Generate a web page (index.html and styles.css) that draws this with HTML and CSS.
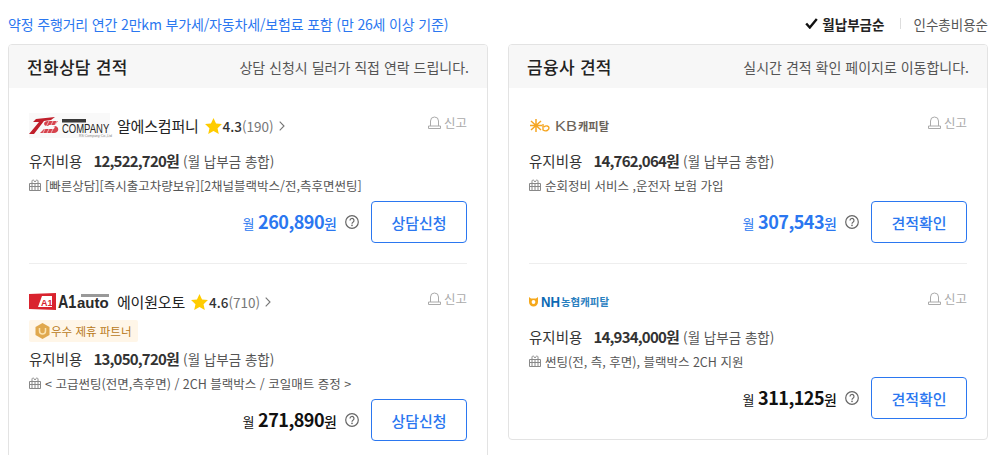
FILE: index.html
```html
<!DOCTYPE html>
<html lang="ko">
<head>
    <meta charset="UTF-8">
    <meta name="viewport" content="width=device-width, initial-scale=1.0">
    <title>견적 비교</title>
    <link rel="stylesheet" href="styles.css">
</head>
<body>
    <svg class="icon-defs" width="0" height="0">
        <symbol id="i-gift" viewBox="0 0 12 12">
            <path d="M.5 4.5h11v7H.5zM6 4.5v7M3 4.5v7M9 4.5v7M.5 7.5h11M3 4.5V2.200C3 .6 5.200.6 6 3c.8-2.400 3-2.400 3-.8v2.300" fill="none" stroke="#888" stroke-width="1"/>
        </symbol>
        <symbol id="i-siren" viewBox="0 0 13 13">
            <path d="M2.500 10V5a4 4 0 0 1 8 0v5M.5 12.500h12V10H.5z" fill="none" stroke="#aaa" stroke-width="1"/>
        </symbol>
        <symbol id="i-help" viewBox="0 0 14 14">
            <circle cx="7" cy="7" r="6.300" fill="none" stroke="#666" stroke-width="1.200"/>
            <path d="M5 5.500a2 2 0 1 1 3 1.700c-.7.400-1 .8-1 1.500" fill="none" stroke="#666" stroke-width="1.200"/>
            <circle cx="7" cy="10.400" r=".8" fill="#666"/>
        </symbol>
        <symbol id="i-star" viewBox="0 0 18 17">
            <path d="M9 0l2.700 5.800 6.300.7-4.700 4.300 1.300 6.200L9 13.900 3.400 17l1.300-6.200L0 6.500l6.300-.7z" fill="#fc0"/>
        </symbol>
        <symbol id="i-chevron" viewBox="0 0 6 10">
            <path d="M.7.7L5 5 .7 9.300" fill="none" stroke="#777" stroke-width="1.100"/>
        </symbol>
    </svg>

    <div class="top-bar">
        <p class="notice">약정 주행거리 연간 2만km 부가세/자동차세/보험료 포함 (만 26세 이상 기준)</p>
        <div class="sort">
            <span class="sort-item active">
                <svg class="check" width="13" height="11" viewBox="0 0 13 11"><path d="M1.200 5.500L4.800 9.500 11.800 1" fill="none" stroke="#111" stroke-width="2.400"/></svg>
                월납부금순
            </span>
            <span class="sort-item">인수총비용순</span>
        </div>
    </div>

    <div class="columns">
        <section class="panel">
            <div class="panel-head">
                <h2>전화상담 견적</h2>
                <p>상담 신청시 딜러가 직접 연락 드립니다.</p>
            </div>

            <div class="item">
                <div class="item-head">
                    <div class="brand">
                        <svg class="logo" width="81" height="25" viewBox="0 0 81 25">
                            <rect width="81" height="25" fill="#f9f9f9"/>
                            <path d="M0 21L10 9H4l3-3 19-2-4 3-7 1L5 21z" fill="#c01f2b"/>
                            <path d="M11 20l4-4h9c2 0 2-3 0-3h-6c-4 0-4-5 1-5h10l-3 4h-6c-1 0-1 1 0 1h6c5 1 4 7-1 7z" fill="#d6424c"/>
                            <path d="M14 20l6-12M18 20l6-12M22 20l6-12" stroke="#fff" stroke-width=".6" fill="none"/>
                            <rect x="33" y="6" width="24" height="3.500" fill="#3a3a3a"/>
                            <text class="logo-company" x="45.200" y="20.500" transform="scale(.73 1)">COMPANY</text>
                            <text class="logo-tiny" x="50" y="24.300">RS Company Co.,Ltd</text>
                        </svg>
                        <span class="brand-name">알에스컴퍼니</span>
                        <svg class="star" width="17" height="16"><use href="#i-star"/></svg>
                        <span class="score">4.3</span><span class="count">(190)</span>
                        <svg class="chevron" width="6" height="10"><use href="#i-chevron"/></svg>
                    </div>
                    <span class="report"><svg width="13" height="13"><use href="#i-siren"/></svg>신고</span>
                </div>
                <p class="cost">유지비용 <b>12,522,720원</b> <span>(월 납부금 총합)</span></p>
                <p class="gift"><svg width="12" height="12"><use href="#i-gift"/></svg>[빠른상담][즉시출고차량보유][2채널블랙박스/전,측후면썬팅]</p>
                <div class="price-row">
                    <span class="price blue">월 <b>260,890</b><strong>원</strong></span>
                    <svg class="help" width="14" height="14"><use href="#i-help"/></svg>
                    <a class="action">상담신청</a>
                </div>
            </div>

            <div class="item">
                <div class="item-head">
                    <div class="brand">
                        <svg class="logo" width="81" height="25" viewBox="0 0 81 25">
                            <path d="M0 5l27-1v17L0 20z" fill="#d9232e"/>
                            <path d="M9 18l4-11h10v11z" fill="#fff"/>
                            <text class="logo-a1" x="12" y="16.500">A1</text>
                            <text class="logo-a1-dark" x="36.200" y="19" transform="scale(.8 1)">A1</text>
                            <rect x="52" y="5" width="28" height="3" fill="#999"/>
                            <text class="logo-auto" x="48" y="19">auto</text>
                        </svg>
                        <span class="brand-name">에이원오토</span>
                        <svg class="star" width="17" height="16"><use href="#i-star"/></svg>
                        <span class="score">4.6</span><span class="count">(710)</span>
                        <svg class="chevron" width="6" height="10"><use href="#i-chevron"/></svg>
                    </div>
                    <span class="report"><svg width="13" height="13"><use href="#i-siren"/></svg>신고</span>
                </div>
                <div class="partner">
                    <svg width="15" height="16" viewBox="0 0 14 16"><path d="M7 0l7 4v8l-7 4-7-4V4z" fill="#e0a84e"/><path d="M4 5v3a3 3 0 0 0 6 0V5" fill="none" stroke="#fbe3b0" stroke-width="1.500"/></svg>
                    우수 제휴 파트너
                </div>
                <p class="cost">유지비용 <b>13,050,720원</b> <span>(월 납부금 총합)</span></p>
                <p class="gift"><svg width="12" height="12"><use href="#i-gift"/></svg>&lt; 고급썬팅(전면,측후면) / 2CH 블랙박스 / 코일매트 증정 &gt;</p>
                <div class="price-row">
                    <span class="price">월 <b>271,890</b><strong>원</strong></span>
                    <svg class="help" width="14" height="14"><use href="#i-help"/></svg>
                    <a class="action">상담신청</a>
                </div>
            </div>
        </section>

        <section class="panel">
            <div class="panel-head">
                <h2>금융사 견적</h2>
                <p>실시간 견적 확인 페이지로 이동합니다.</p>
            </div>

            <div class="item">
                <div class="item-head">
                    <div class="brand">
                        <svg class="logo" width="81" height="25" viewBox="0 0 81 25">
                            <path d="M7 6v13M2 8l10 9M2 17l10-9M1 12.500h12" stroke="#f5a623" stroke-width="1.500" fill="none"/>
                            <path d="M14 11v6c3 2 6 0 6-2s-3-3-5-1" stroke="#f5a623" stroke-width="1.400" fill="none"/>
                            <text class="logo-kb" x="26" y="18" textLength="22" lengthAdjust="spacingAndGlyphs">KB</text>
                            <text class="logo-kb-name" x="49" y="17.500" textLength="31" lengthAdjust="spacingAndGlyphs">캐피탈</text>
                        </svg>
                    </div>
                    <span class="report"><svg width="13" height="13"><use href="#i-siren"/></svg>신고</span>
                </div>
                <p class="cost">유지비용 <b>14,762,064원</b> <span>(월 납부금 총합)</span></p>
                <p class="gift"><svg width="12" height="12"><use href="#i-gift"/></svg>순회정비 서비스 ,운전자 보험 가입</p>
                <div class="price-row">
                    <span class="price blue">월 <b>307,543</b><strong>원</strong></span>
                    <svg class="help" width="14" height="14"><use href="#i-help"/></svg>
                    <a class="action">견적확인</a>
                </div>
            </div>

            <div class="item">
                <div class="item-head">
                    <div class="brand">
                        <svg class="logo" width="81" height="25" viewBox="0 0 81 25">
                            <path d="M0 8l2 1.500h5L9 8v5a4.500 4.500 0 0 1-9 0z" fill="#f5a81c"/>
                            <circle cx="4.500" cy="13" r="1.900" fill="#fff"/>
                            <text class="logo-nh" x="12" y="17.500" textLength="19" lengthAdjust="spacingAndGlyphs">NH</text>
                            <text class="logo-nh-name" x="32" y="17.300" textLength="48" lengthAdjust="spacingAndGlyphs">농협캐피탈</text>
                        </svg>
                    </div>
                    <span class="report"><svg width="13" height="13"><use href="#i-siren"/></svg>신고</span>
                </div>
                <p class="cost">유지비용 <b>14,934,000원</b> <span>(월 납부금 총합)</span></p>
                <p class="gift"><svg width="12" height="12"><use href="#i-gift"/></svg>썬팅(전, 측, 후면), 블랙박스 2CH 지원</p>
                <div class="price-row">
                    <span class="price">월 <b>311,125</b><strong>원</strong></span>
                    <svg class="help" width="14" height="14"><use href="#i-help"/></svg>
                    <a class="action">견적확인</a>
                </div>
            </div>
        </section>
    </div>
</body>
</html>
```

FILE: styles.css
```css
html, body {
    height: 455px;
    overflow: hidden;
}
body {
    font-family: "Noto Sans CJK KR", "Noto Sans", sans-serif;
    background-color: #ffffff;
    color: #333;
    margin: 0;
    padding: 0 13px 0 8px;
    box-sizing: border-box;
}
p {
    margin: 0;
}
.icon-defs {
    position: absolute;
}

.top-bar {
    display: flex;
    justify-content: space-between;
    align-items: center;
    height: 44px;
    padding-top: 3px;
    box-sizing: border-box;
}
.notice {
    font-size: 14px;
    letter-spacing: -0.16px;
    color: #2b77f0;
}
.sort {
    display: flex;
    align-items: center;
    font-size: 13.5px;
    color: #555;
}
.sort-item {
    display: flex;
    align-items: center;
}
.sort-item.active {
    font-weight: 700;
    color: #222;
}
.sort-item.active::after {
    content: "";
    width: 1px;
    height: 11px;
    background-color: #ddd;
    margin: 0 12px 0 16px;
}
.check {
    margin-right: 4px;
}

.columns {
    display: flex;
    align-items: flex-start;
    gap: 20px;
}
.panel {
    width: 480px;
    box-sizing: border-box;
    border: 1px solid #e3e3e3;
    border-radius: 4px;
    background-color: #fff;
    overflow: hidden;
}
.panel-head {
    display: flex;
    justify-content: space-between;
    align-items: center;
    height: 43px;
    padding: 0 18px;
    background-color: #f7f7f7;
}
.panel-head h2 {
    margin: 0;
    font-size: 17px;
    letter-spacing: 0.3px;
    font-weight: 500;
    color: #222;
}
.panel-head p {
    font-size: 14px;
    color: #555;
}

.item {
    margin: 0 20px;
    padding: 25px 0 20px;
    border-bottom: 1px solid #eee;
}
.item:last-child {
    border-bottom: none;
}
.item-head {
    display: flex;
    justify-content: space-between;
    align-items: flex-start;
    height: 25px;
    margin-bottom: 13px;
}
.brand {
    display: flex;
    align-items: center;
    height: 25px;
}
.logo {
    margin-right: 7px;
    overflow: visible;
}
.logo-company {
    font: 400 13px "Liberation Sans", sans-serif;
    fill: #222;
}
.logo-tiny {
    font: 400 3.5px "Liberation Sans", sans-serif;
    fill: #888;
}
.logo-a1 {
    font: 700 9px "Liberation Sans", sans-serif;
    fill: #d9232e;
}
.logo-a1-dark {
    font: 700 18px "Liberation Sans", sans-serif;
    fill: #2a2a2a;
}
.logo-auto {
    font: 700 15px "Liberation Sans", sans-serif;
    fill: #2a2a2a;
}
.logo-kb {
    font: 400 15px "Liberation Sans", sans-serif;
    fill: #6b6259;
}
.logo-kb-name {
    font: 700 11px "Noto Sans CJK KR", sans-serif;
    fill: #6b6259;
}
.logo-nh {
    font: 700 14px "Liberation Sans", sans-serif;
    fill: #0c69b4;
}
.logo-nh-name {
    font: 700 10.5px "Noto Sans CJK KR", sans-serif;
    fill: #2a80bf;
}
.brand-name {
    font-size: 15px;
    letter-spacing: -0.2px;
    color: #222;
}
.star {
    margin: 0 1px 0 6px;
}
.score {
    font-size: 13.5px;
    font-weight: 500;
    color: #333;
}
.count {
    font-size: 13.5px;
    color: #777;
}
.chevron {
    margin-left: 5px;
}
.report {
    display: flex;
    align-items: center;
    gap: 3px;
    font-size: 12.5px;
    color: #aaa;
}

.partner {
    display: flex;
    align-items: center;
    gap: 1px;
    width: fit-content;
    height: 22px;
    margin: -7px 0 7px;
    padding: 0 6px;
    font-size: 11.5px;
    color: #b8791a;
    background-color: #fff6e8;
    border-radius: 2px;
}
.cost {
    height: 20px;
    line-height: 20px;
    font-size: 14.5px;
    color: #333;
}
.cost b {
    margin-left: 7px;
    font-size: 15px;
    letter-spacing: -0.8px;
    font-weight: 700;
}
.cost span {
    font-size: 13.5px;
    color: #555;
}
.gift {
    display: flex;
    align-items: center;
    gap: 4px;
    height: 20px;
    margin-top: 4px;
    font-size: 12.5px;
    color: #555;
}

.price-row {
    display: flex;
    justify-content: flex-end;
    align-items: center;
    margin-top: 6px;
}
.price {
    margin-bottom: 2px;
    font-size: 13px;
    color: #111;
}
.price b {
    font-size: 18px;
    letter-spacing: -0.5px;
    font-weight: 700;
}
.price strong {
    font-size: 14px;
    font-weight: 500;
}
.price.blue {
    color: #2b77f0;
}
.help {
    margin: 0 12px 0 8px;
}
.action {
    display: flex;
    justify-content: center;
    align-items: center;
    width: 96px;
    height: 42px;
    box-sizing: border-box;
    border: 1px solid #2b77f0;
    border-radius: 4px;
    font-size: 15px;
    font-weight: 500;
    color: #2b77f0;
}
```
